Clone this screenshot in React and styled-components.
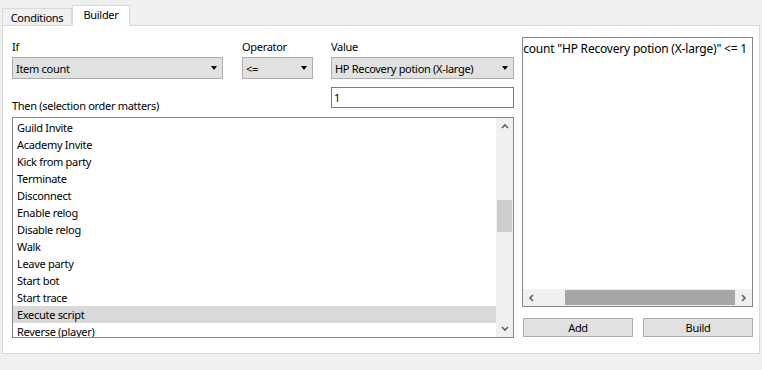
import React from "react";
import styled, { createGlobalStyle } from "styled-components";

const GlobalStyle = createGlobalStyle`
  html, body { margin: 0; padding: 0; background: #f0f0f0; }
  body {
    font-family: "Noto Sans", "Open Sans", sans-serif;
    font-size: 11px;
    letter-spacing: -0.3px;
    color: #000;
  }
  * { box-sizing: border-box; }
`;

const Page = styled.div`
  width: 762px;
  height: 370px;
  padding: 0 2px;
  display: flex;
  flex-direction: column;
  background: #f0f0f0;
`;

const TabStrip = styled.div`
  height: 25px;
  display: flex;
  align-items: flex-end;
`;

const Tab = styled.div`
  position: relative;
  z-index: ${(p) => (p.$active ? 1 : 0)};
  width: ${(p) => p.$width}px;
  height: ${(p) => (p.$active ? 21 : 17)}px;
  margin-bottom: ${(p) => (p.$active ? -1 : 0)}px;
  background: ${(p) => (p.$active ? "#ffffff" : "#f0f0f0")};
  border: 1px solid #d9d9d9;
  border-bottom: none;
  display: flex;
  align-items: center;
  justify-content: center;
  padding-bottom: ${(p) => (p.$active ? 3 : 0)}px;
  line-height: 1;
  white-space: nowrap;
`;

const Panel = styled.div`
  width: 758px;
  height: 329px;
  background: #ffffff;
  border: 1px solid #d9d9d9;
  display: flex;
  gap: 8px;
  padding: 11px 6px 0 9px;
`;

const LeftColumn = styled.div`
  margin-top: 2px;
  width: 502px;
  display: grid;
  grid-template-columns: 211px 19px 71px 18px 183px;
  grid-template-rows: 18px 30px 30px 221px;
`;

const Label = styled.div`
  grid-column: ${(p) => p.$col};
  grid-row: ${(p) => p.$row};
  align-self: ${(p) => p.$align || "start"};
  height: 15px;
  line-height: 15px;
  margin-bottom: ${(p) => p.$mb || 0}px;
  white-space: nowrap;
`;

const Combo = styled.div`
  grid-column: ${(p) => p.$col};
  grid-row: 2;
  height: 22px;
  background: #e1e1e1;
  border: 1px solid #adadad;
  display: flex;
  align-items: center;
  justify-content: space-between;
  padding: 0 5px 0 3px;
  white-space: nowrap;
`;

const Arrow = styled.span`
  width: 0;
  height: 0;
  border-left: 3.5px solid transparent;
  border-right: 3.5px solid transparent;
  border-top: 4px solid #000;
`;

const TextInput = styled.div`
  grid-column: 5;
  grid-row: 3;
  height: 21px;
  border: 1px solid #7a7a7a;
  background: #fff;
  display: flex;
  align-items: center;
  padding: 0 2px;
`;

const ListBox = styled.div`
  grid-column: 1 / 6;
  grid-row: 4;
  border: 1px solid #828790;
  background: #fff;
  display: flex;
  overflow: hidden;
`;

const ListItems = styled.div`
  flex: 1;
  padding-top: 1px;
  overflow: hidden;
`;

const ListItem = styled.div`
  height: 17px;
  line-height: 17px;
  padding-left: 4px;
  background: ${(p) => (p.$selected ? "#d9d9d9" : "transparent")};
  white-space: nowrap;
`;

const VScroll = styled.div`
  width: 17px;
  background: #f0f0f0;
  display: flex;
  flex-direction: column;
`;

const ScrollButton = styled.div`
  width: 17px;
  height: 17px;
  flex: none;
  display: flex;
  align-items: center;
  justify-content: center;
`;

const VTrack = styled.div`
  flex: 1;
  display: flex;
  flex-direction: column;
  align-items: center;
`;

const VThumb = styled.div`
  width: 15px;
  height: 32px;
  background: #cdcdcd;
`;

const RightColumn = styled.div`
  width: 231px;
  display: flex;
  flex-direction: column;
`;

const OutputBox = styled.div`
  height: 270px;
  border: 1px solid #828790;
  background: #fff;
  display: flex;
  flex-direction: column;
`;

const OutputText = styled.div`
  flex: 1;
  overflow: hidden;
  display: flex;
  justify-content: flex-end;
  align-items: flex-start;
  white-space: nowrap;
  padding: 3px 5px 0 0;
  line-height: 15px;
  font-size: 12px;
  letter-spacing: -0.2px;
`;

const OutputLine = styled.div`
  flex: none;
`;

const HScroll = styled.div`
  height: 17px;
  background: #f0f0f0;
  display: flex;
`;

const HTrack = styled.div`
  flex: 1;
  display: flex;
  align-items: center;
  padding-left: 25px;
`;

const HThumb = styled.div`
  flex: 1;
  height: 15px;
  background: #a6a6a6;
`;

const ButtonRow = styled.div`
  margin-top: 11px;
  padding-left: 1px;
  display: flex;
  gap: 10px;
`;

const Button = styled.div`
  width: 110px;
  height: 19px;
  background: #e1e1e1;
  border: 1px solid #adadad;
  display: flex;
  align-items: center;
  justify-content: center;
`;

const Chevron = ({ dir }) => {
  const paths = {
    up: "M1 5 L4 2 L7 5",
    down: "M1 2 L4 5 L7 2",
    left: "M5 1 L2 4 L5 7",
    right: "M2 1 L5 4 L2 7",
  };
  const vertical = dir === "up" || dir === "down";
  return (
    <svg
      width={vertical ? 8 : 7}
      height={vertical ? 7 : 8}
      viewBox={vertical ? "0 0 8 7" : "0 0 7 8"}
    >
      <path d={paths[dir]} fill="none" stroke="#606060" strokeWidth="1.6" />
    </svg>
  );
};

const items = [
  "Guild Invite",
  "Academy Invite",
  "Kick from party",
  "Terminate",
  "Disconnect",
  "Enable relog",
  "Disable relog",
  "Walk",
  "Leave party",
  "Start bot",
  "Start trace",
  "Execute script",
  "Reverse (player)",
];

export default function App() {
  return (
    <>
      <GlobalStyle />
      <Page>
        <TabStrip>
          <Tab $width={70}>Conditions</Tab>
          <Tab $active $width={58}>Builder</Tab>
        </TabStrip>
        <Panel>
          <LeftColumn>
            <Label $col={1} $row={1}>If</Label>
            <Label $col={3} $row={1}>Operator</Label>
            <Label $col={5} $row={1}>Value</Label>
            <Combo $col={1}>
              <span>Item count</span>
              <Arrow />
            </Combo>
            <Combo $col={3}>
              <span>&lt;=</span>
              <Arrow />
            </Combo>
            <Combo $col={5}>
              <span>HP Recovery potion (X-large)</span>
              <Arrow />
            </Combo>
            <TextInput>1</TextInput>
            <Label $col="1 / 4" $row={3} $align="end" $mb={4}>
              Then (selection order matters)
            </Label>
            <ListBox>
              <ListItems>
                {items.map((it) => (
                  <ListItem key={it} $selected={it === "Execute script"}>
                    {it}
                  </ListItem>
                ))}
              </ListItems>
              <VScroll>
                <ScrollButton>
                  <Chevron dir="up" />
                </ScrollButton>
                <VTrack>
                  <VThumb style={{ marginTop: 65 }} />
                </VTrack>
                <ScrollButton>
                  <Chevron dir="down" />
                </ScrollButton>
              </VScroll>
            </ListBox>
          </LeftColumn>
          <RightColumn>
            <OutputBox>
              <OutputText>
                <OutputLine>Item count "HP Recovery potion (X-large)" &lt;= 1</OutputLine>
              </OutputText>
              <HScroll>
                <ScrollButton>
                  <Chevron dir="left" />
                </ScrollButton>
                <HTrack>
                  <HThumb />
                </HTrack>
                <ScrollButton>
                  <Chevron dir="right" />
                </ScrollButton>
              </HScroll>
            </OutputBox>
            <ButtonRow>
              <Button>Add</Button>
              <Button>Build</Button>
            </ButtonRow>
          </RightColumn>
        </Panel>
      </Page>
    </>
  );
}
